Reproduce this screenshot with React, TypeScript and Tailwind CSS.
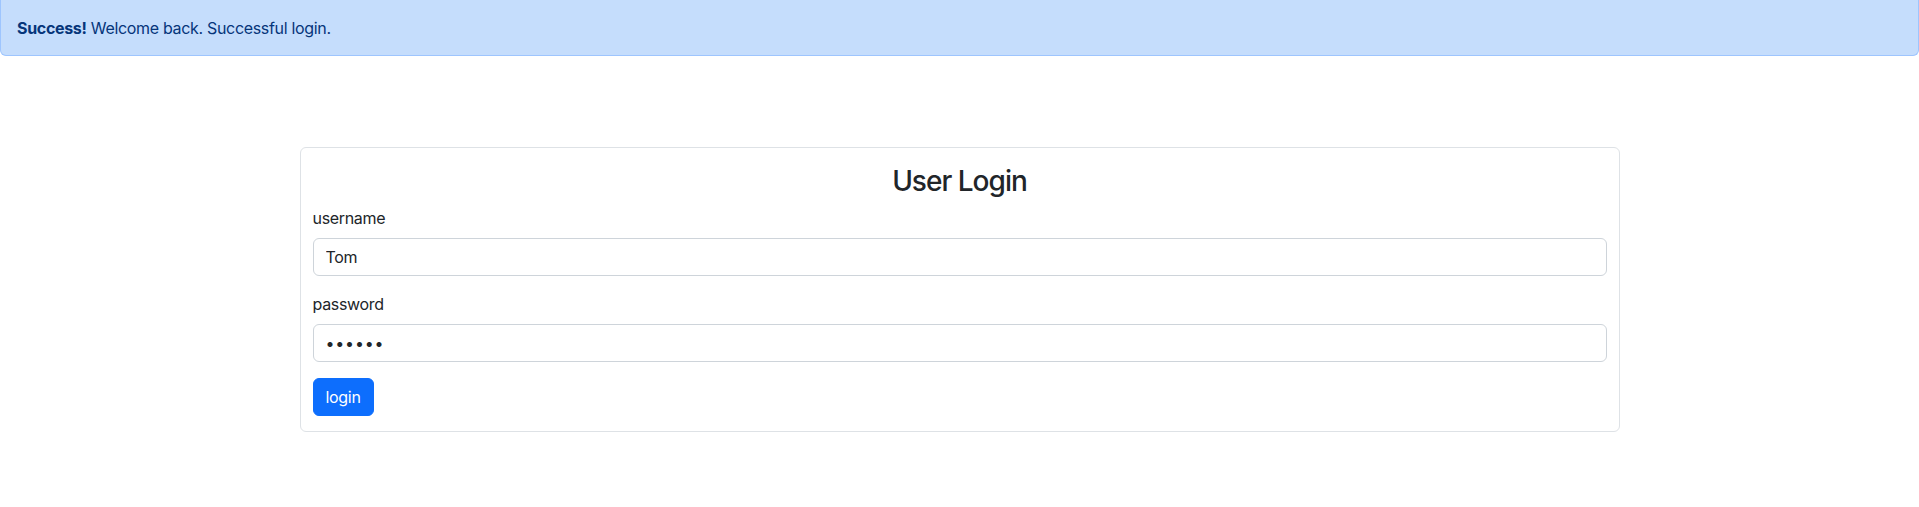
import React from "react";

export default function App() {
  return (
    <div className="min-h-[507px] bg-white text-[#212529] font-['Inter','Liberation_Sans',Arial,sans-serif] text-base leading-6 tracking-[-0.02em]">
      <div className="h-[56px] w-full rounded-b-[6px] border border-t-0 border-[#9ec5fe] bg-[#c5ddfc] px-4 pt-4 text-[#06357a]">
        <strong className="font-bold">Success!</strong> Welcome back. Successful login.
      </div>
      <div className="mx-auto mt-[91px] w-[1320px] rounded-[6px] border border-[#dee2e6] px-3 pt-[17px] pb-[15px]">
        <h3 className="mb-[7px] text-center text-[28px] leading-[1.2] font-medium tracking-[-0.035em]">User Login</h3>
        <form onSubmit={(e) => e.preventDefault()}>
          <div className="mb-4">
            <label className="mb-2 block">username</label>
            <input
              type="text"
              defaultValue="Tom"
              className="block h-[38px] w-full rounded-[6px] border border-[#ced4da] px-3 py-1.5 text-base text-[#212529] outline-none"
            />
          </div>
          <div className="mb-4">
            <label className="mb-2 block">password</label>
            <input
              type="password"
              defaultValue="123456"
              className="block h-[38px] w-full rounded-[6px] border border-[#ced4da] px-3 py-1.5 text-base text-[#212529] outline-none tracking-[0.05em]"
            />
          </div>
          <button
            type="submit"
            className="h-[38px] rounded-[6px] border border-[#0d6efd] bg-[#0d6efd] px-3 text-base text-white"
          >
            login
          </button>
        </form>
      </div>
    </div>
  );
}
